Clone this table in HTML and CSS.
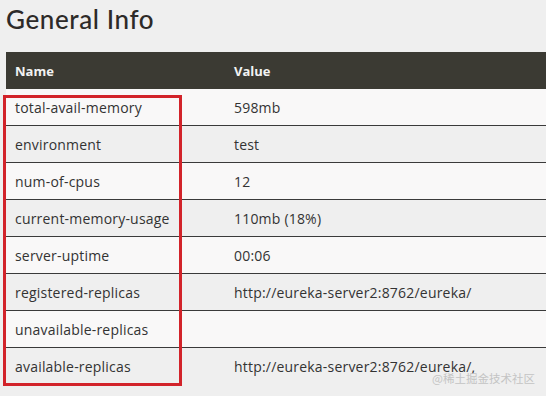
FILE: index.html
```html
<!DOCTYPE html>
<html>
<head>
<meta charset="utf-8">
<link rel="stylesheet" href="styles.css">
</head>
<body>
<div class="page">
  <h1 class="title">General Info</h1>
  <table class="info">
    <thead>
      <tr><th class="c-name">Name</th><th>Value</th></tr>
    </thead>
    <tbody>
      <tr><td>total-avail-memory</td><td>598mb</td></tr>
      <tr><td>environment</td><td>test</td></tr>
      <tr><td>num-of-cpus</td><td>12</td></tr>
      <tr><td>current-memory-usage</td><td>110mb (18%)</td></tr>
      <tr><td>server-uptime</td><td>00:06</td></tr>
      <tr><td>registered-replicas</td><td>http://eureka-server2:8762/eureka/</td></tr>
      <tr><td>unavailable-replicas</td><td></td></tr>
      <tr><td>available-replicas</td><td>http://eureka-server2:8762/eureka/,</td></tr>
    </tbody>
  </table>
  <div class="highlight"></div>
  <div class="watermark">@稀土掘金技术社区</div>
</div>
</body>
</html>
```
FILE: styles.css
```css
html, body {
  margin: 0;
  padding: 0;
  background: #efefef;
}
.page {
  position: relative;
  width: 546px;
  height: 396px;
  overflow: hidden;
  padding: 0 0 0 6px;
  box-sizing: border-box;
  font-family: "Open Sans", "Noto Sans", sans-serif;
  color: #333;
}
.title {
  margin: 0;
  height: 52px;
  padding-top: 4px;
  box-sizing: border-box;
  font-family: "Lato", "Open Sans", sans-serif;
  font-weight: 500;
  font-size: 26px;
  line-height: 30px;
  color: #2d2a28;
  letter-spacing: 0.6px;
}
.info {
  border-collapse: collapse;
  width: 560px;
  font-size: 14px;
  letter-spacing: 0.2px;
}
.info th {
  background: #3b3a33;
  color: #f2f2f2;
  font-weight: 700;
  text-align: left;
  height: 37px;
  padding: 0 0 0 9px;
  font-size: 13px;
  letter-spacing: 0;
}
.info th.c-name {
  width: 210px;
}
.info td {
  height: 36px;
  padding: 0 0 0 9px;
  border-bottom: 1px solid #3a3a3a;
  vertical-align: middle;
}
.info tbody tr:nth-child(odd) td {
  background: #f9f8f8;
}
.info tbody tr:nth-child(even) td {
  background: #efefef;
}
.info tbody tr:last-child td {
  border-bottom: none;
}
.highlight {
  position: absolute;
  left: 3px;
  top: 95px;
  width: 173px;
  height: 285px;
  border: 3px solid #d2232a;
}
.watermark {
  position: absolute;
  left: 432px;
  top: 371px;
  font-family: "Noto Sans CJK SC", sans-serif;
  font-size: 11.5px;
  line-height: 14px;
  color: #c4c4c4;
  letter-spacing: 0;
}
```
